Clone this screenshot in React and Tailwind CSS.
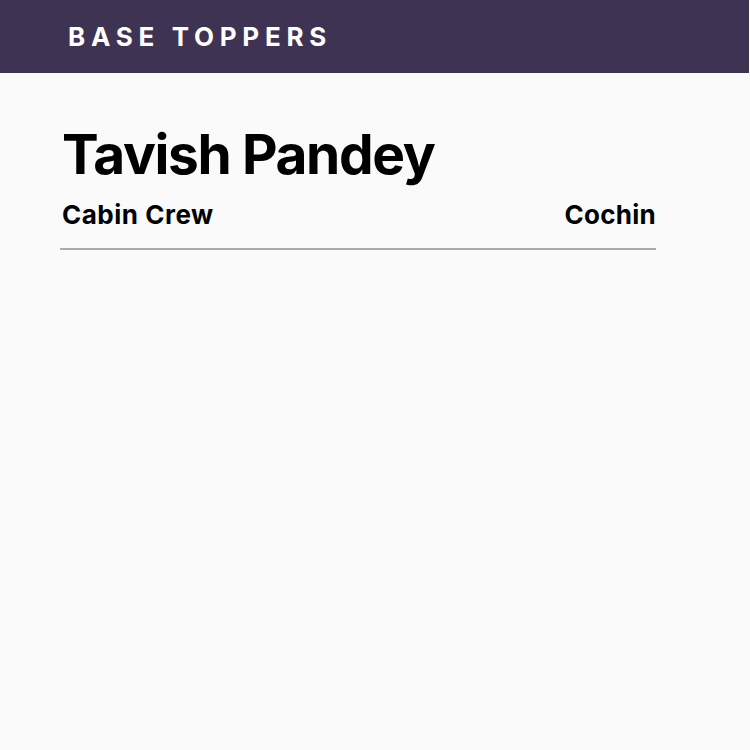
import React from 'react';

export default function App() {
    return (
        <div className="min-h-screen bg-[#fafafa] font-['Inter',sans-serif] text-black">
            {/* top bar */}
            <header className="h-[73px] w-[749px] bg-[#3e3353] flex items-center pl-[68px]">
                <h1 className="text-[26px] font-bold tracking-[0.22em] text-white">BASE TOPPERS</h1>
            </header>

            <main className="w-[596px] ml-[60px] pt-[54px]">
                <h2 className="text-[55px] font-bold leading-none tracking-[-0.025em] pl-[2px]">Tavish Pandey</h2>
                <div className="flex justify-between items-end mt-[20px] pb-[20px] border-b-2 border-[#aaaaaa] pl-[2px]">
                    <span className="text-[26px] font-bold leading-none tracking-[0.02em]">Cabin Crew</span>
                    <span className="text-[26px] font-bold leading-none tracking-[0.01em]">Cochin</span>
                </div>
            </main>
        </div>
    );
}
